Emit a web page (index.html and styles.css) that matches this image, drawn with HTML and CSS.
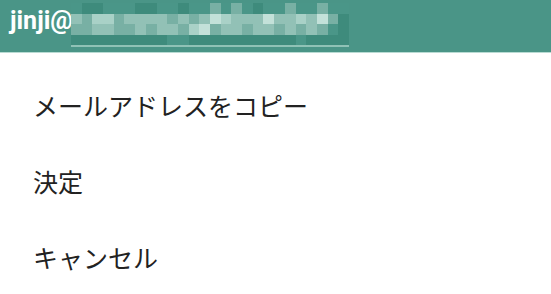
FILE: index.html
```html
<!DOCTYPE html>
<html lang="ja">
<head>
    <meta charset="UTF-8">
    <meta name="viewport" content="width=device-width, initial-scale=1.0">
    <title>jinji@</title>
    <link rel="stylesheet" href="styles.css">
</head>
<body>
    <div class="dialog">
        <div class="title-bar">
            <span class="title">jinji@</span>
            <div class="masked">
                <div class="mosaic">
                    <i class="m"></i><i class="d"></i><i class="d"></i><i class="m"></i><i class="m"></i><i class="m"></i><i class="d"></i><i class="d"></i><i class="m"></i><i class="m"></i><i class="d"></i><i class="m"></i><i class="m"></i><i class="l1"></i><i class="m"></i><i class="l1"></i><i class="m"></i><i class="d"></i><i class="m"></i><i class="m"></i><i class="l1"></i><i class="m"></i><i class="m"></i><i class="l1"></i><i class="m"></i><i class="m"></i>
                    <i class="l2"></i><i class="l1"></i><i class="l3"></i><i class="l3"></i><i class="l1"></i><i class="l2"></i><i class="l2"></i><i class="l2"></i><i class="l2"></i><i class="l1"></i><i class="l2"></i><i class="l1"></i><i class="l2"></i><i class="l4"></i><i class="l3"></i><i class="l2"></i><i class="l2"></i><i class="l2"></i><i class="l4"></i><i class="l2"></i><i class="l2"></i><i class="l3"></i><i class="l2"></i><i class="l4"></i><i class="l1"></i><i class="d"></i>
                    <i class="l1"></i><i class="l1"></i><i class="l2"></i><i class="l2"></i><i class="l1"></i><i class="l1"></i><i class="l2"></i><i class="l1"></i><i class="l2"></i><i class="l2"></i><i class="l1"></i><i class="l3"></i><i class="l4"></i><i class="l1"></i><i class="l2"></i><i class="l2"></i><i class="l1"></i><i class="l2"></i><i class="l2"></i><i class="l1"></i><i class="l2"></i><i class="l1"></i><i class="l2"></i><i class="l1"></i><i class="m"></i><i class="d"></i>
                    <i class="d"></i><i class="d"></i><i class="d"></i><i class="d"></i><i class="d"></i><i class="d"></i><i class="d"></i><i class="d"></i><i class="d"></i><i class="m"></i><i class="m"></i><i class="d"></i><i class="d"></i><i class="d"></i><i class="d"></i><i class="d"></i><i class="d"></i><i class="d"></i><i class="d"></i><i class="d"></i><i class="d"></i><i class="m"></i><i class="d"></i><i class="d"></i><i class="d"></i><i class="d"></i>
                </div>
            </div>
        </div>

        <ul class="menu">
            <li>メールアドレスをコピー</li>
            <li>決定</li>
            <li>キャンセル</li>
        </ul>
    </div>
</body>
</html>
```

FILE: styles.css
```css
body {
    margin: 0;
    background: #fff;
    font-family: "Noto Sans CJK JP", "Noto Sans", sans-serif;
}
.dialog {
    width: 551px;
    height: 294px;
    overflow: hidden;
}
.title-bar {
    height: 52px;
    background-color: #4a9587;
    border-bottom: 1px solid #b9dbd3;
    display: flex;
    align-items: flex-start;
    padding-left: 10px;
}
.title {
    font-family: Roboto, sans-serif;
    font-weight: bold;
    font-size: 25px;
    color: #fff;
    line-height: 25px;
    margin-top: 8px;
    width: 61px;
    white-space: nowrap;
}
.masked {
    position: relative;
    margin-top: 3px;
    width: 278px;
    border-bottom: 2px solid #8fc2b6;
}
.mosaic {
    display: grid;
    grid-template-columns: repeat(26, 1fr);
    grid-auto-rows: 10.5px;
}
.mosaic i { display: block; }
.mosaic .d  { background: #3e8b7c; }
.mosaic .m  { background: #4a9688; }
.mosaic .l1 { background: #78b0a4; }
.mosaic .l2 { background: #92c1b6; }
.mosaic .l3 { background: #a9d1c7; }
.mosaic .l4 { background: #c3e1d9; }
.menu {
    list-style: none;
    margin: 0;
    padding: 14px 0 0 0;
}
.menu li {
    height: 76px;
    display: flex;
    align-items: center;
    padding-left: 33px;
    font-size: 25px;
    color: #222;
}
```
